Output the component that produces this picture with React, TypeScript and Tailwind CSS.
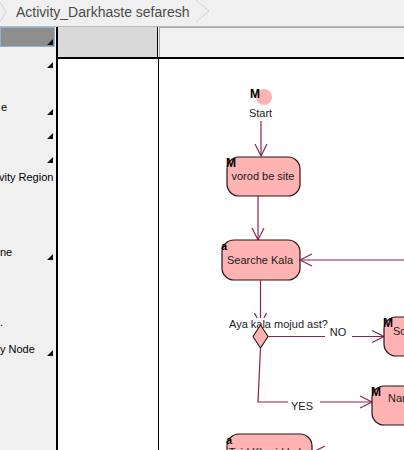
import React from "react";

const LINE = "#8b2350";
const FILL = "#ffb3b3";
const EDGE = "#2b1414";

function Tri() {
  return (
    <svg width="6" height="6" viewBox="0 0 6 6" className="shrink-0">
      <polygon points="6,0 6,6 0,6" fill="#111" />
    </svg>
  );
}

// open arrow head, tip at (x, y), pointing along (dx, dy)
function Head({ x, y, dx, dy }: { x: number; y: number; dx: number; dy: number }) {
  const len = 12;
  const half = 6;
  const nx = -dy;
  const ny = dx;
  const bx = x - dx * len;
  const by = y - dy * len;
  const pts = `${bx + nx * half},${by + ny * half} ${x},${y} ${bx - nx * half},${by - ny * half}`;
  return <polyline points={pts} fill="none" stroke={LINE} strokeWidth="1.2" />;
}

function Action({
  x,
  y,
  w,
  h,
  tag,
  label,
  lx,
  ly,
  anchor = "middle",
}: {
  x: number;
  y: number;
  w: number;
  h: number;
  tag: string;
  label: string;
  lx: number;
  ly: number;
  anchor?: "middle" | "start";
}) {
  return (
    <g>
      <rect x={x} y={y} width={w} height={h} rx="12" fill={FILL} stroke={EDGE} strokeWidth="1.2" />
      <text x={lx} y={ly} fontSize="11" textAnchor={anchor} fill="#1a1a1a">
        {label}
      </text>
      <text x={x - 1} y={y + (tag === "M" ? 10 : 10)} fontSize={tag === "M" ? 12 : 11} fontWeight="bold" fill="#000">
        {tag}
      </text>
    </g>
  );
}

function Diagram() {
  return (
    <svg
      width="404"
      height="450"
      viewBox="0 0 404 450"
      className="absolute left-0 top-0 pointer-events-none"
      style={{ fontFamily: "'Liberation Sans', Arial, sans-serif" }}
    >
      {/* start */}
      <circle cx="264" cy="97" r="8" fill={FILL} />
      <text x="250" y="98" fontSize="12" fontWeight="bold" fill="#000">
        M
      </text>
      <text x="260.5" y="117" fontSize="11" textAnchor="middle" fill="#1a1a1a">
        Start
      </text>
      <line x1="261" y1="121" x2="261" y2="156" stroke={LINE} strokeWidth="1.2" />
      <Head x={261} y={156} dx={0} dy={1} />

      <Action x={227} y={157} w={73} h={39} tag="M" label="vorod be site" lx={263} ly={180} />

      <line x1="258" y1="196" x2="258" y2="240" stroke={LINE} strokeWidth="1.2" />
      <Head x={258} y={240} dx={0} dy={1} />

      <Action x={222} y={240} w={78} h={40} tag="a" label="Searche Kala" lx={260} ly={264} />

      <line x1="404" y1="260" x2="300" y2="260" stroke={LINE} strokeWidth="1.2" />
      <Head x={300} y={260} dx={-1} dy={0} />

      {/* decision */}
      <line x1="260.5" y1="280" x2="260.5" y2="325" stroke={LINE} strokeWidth="1.2" />
      <Head x={260.5} y={325} dx={0} dy={1} />
      <rect x="228" y="318" width="101" height="12" fill="#fff" />
      <text x="229" y="328" fontSize="11" fill="#1a1a1a">
        Aya kala mojud ast?
      </text>
      <polygon points="260.5,325 268,336.5 260.5,348 253,336.5" fill={FILL} stroke={EDGE} strokeWidth="1.1" />

      {/* NO branch */}
      <line x1="268" y1="336.5" x2="384" y2="336.5" stroke={LINE} strokeWidth="1.2" />
      <Head x={384} y={336.5} dx={1} dy={0} />
      <rect x="325" y="326" width="27" height="14" fill="#fff" />
      <text x="338" y="336" fontSize="11" textAnchor="middle" fill="#1a1a1a">
        NO
      </text>
      <Action x={384} y={317} w={60} h={39} tag="M" label="Sodur factor" lx={393} ly={335} anchor="start" />

      {/* YES branch */}
      <polyline points="260.5,348 258,402 372,402" fill="none" stroke={LINE} strokeWidth="1.2" />
      <Head x={372} y={402} dx={1} dy={0} />
      <rect x="288" y="397" width="32" height="15" fill="#fff" />
      <text x="302" y="410" fontSize="11" textAnchor="middle" fill="#1a1a1a">
        YES
      </text>
      <Action x={372} y={386} w={60} h={39} tag="M" label="Namayesh" lx={388} ly={402} anchor="start" />

      <Action x={227} y={434} w={85} h={40} tag="a" label="Taid Kharid kala" lx={268} ly={456} />
      <line x1="404" y1="452" x2="313" y2="452" stroke={LINE} strokeWidth="1.2" />
      <Head x={313} y={452} dx={-1} dy={0} />
    </svg>
  );
}

function Palette() {
  return (
    <div className="w-[56px] shrink-0 flex flex-col text-[11px] leading-[13px] text-black overflow-hidden">
      <div className="h-[20px] w-[55px] bg-[#8e8e8e] border border-[#8cb4dc] flex items-end justify-end pr-[1px] pb-[1px]">
        <Tri />
      </div>
      <div className="h-[22px] flex items-end justify-end pr-[3px] pb-[1px]">
        <Tri />
      </div>
      <div className="h-[47px] flex items-end justify-between pr-[3px] pb-[1px]">
        <span className="mb-[1px] ml-[1px]">e</span>
        <Tri />
      </div>
      <div className="h-[24px] flex items-end justify-end pr-[3px] pb-[1px]">
        <Tri />
      </div>
      <div className="h-[24px] flex items-end justify-end pr-[3px] pb-[1px]">
        <Tri />
      </div>
      <div className="h-[26px] flex items-center whitespace-nowrap">
        <span className="ml-[-1px]">vity Region</span>
      </div>
      <div className="h-[71px] flex items-end justify-between pr-[3px] pb-[1px]">
        <span className="mb-[1px]">ne</span>
        <Tri />
      </div>
      <div className="h-[69px] flex items-end">
        <span className="mb-[1px]">.</span>
      </div>
      <div className="h-[27px] flex items-end justify-between pr-[3px] pb-[1px] whitespace-nowrap">
        <span>y Node</span>
        <Tri />
      </div>
    </div>
  );
}

export default function App() {
  return (
    <div
      className="relative w-[404px] h-[450px] overflow-hidden bg-[#f0f0f0] flex flex-col"
      style={{ fontFamily: "'Liberation Sans', Arial, sans-serif" }}
    >
      <div className="h-[27px] shrink-0 border-b border-[#b9b9b9] flex items-start">
        <svg width="8" height="24" viewBox="0 0 8 24" className="shrink-0">
          <polyline points="0,2 6,12 0,22" fill="none" stroke="#d2d2d2" strokeWidth="1" />
        </svg>
        <span className="ml-[8px] mt-[4px] text-[14px] leading-[16px] text-[#4a4a4a] whitespace-nowrap">
          Activity_Darkhaste sefaresh
        </span>
        <svg width="18" height="24" viewBox="0 0 18 24" className="shrink-0 ml-[5px]">
          <polyline points="1,0 14,11 1,22" fill="none" stroke="#d2d2d2" strokeWidth="1" />
        </svg>
      </div>

      <div className="flex-1 flex min-h-0">
        <Palette />
        <div className="flex-1 flex flex-col border-l-2 border-black bg-white">
          <div className="h-[30px] shrink-0 flex">
            <div className="w-[99px] bg-[#d9d9d9]" />
            <div className="w-px bg-black" />
            <div className="w-px bg-[#f0f0f0]" />
            <div className="flex-1 bg-[#f0f0f0] border-l border-t border-[#a8a8a8]" />
          </div>
          <div className="h-[2px] shrink-0 bg-black" />
          <div className="flex-1 flex">
            <div className="w-[100px] bg-white" />
            <div className="w-px bg-black" />
            <div className="flex-1 bg-white" />
          </div>
        </div>
      </div>

      <Diagram />
    </div>
  );
}
